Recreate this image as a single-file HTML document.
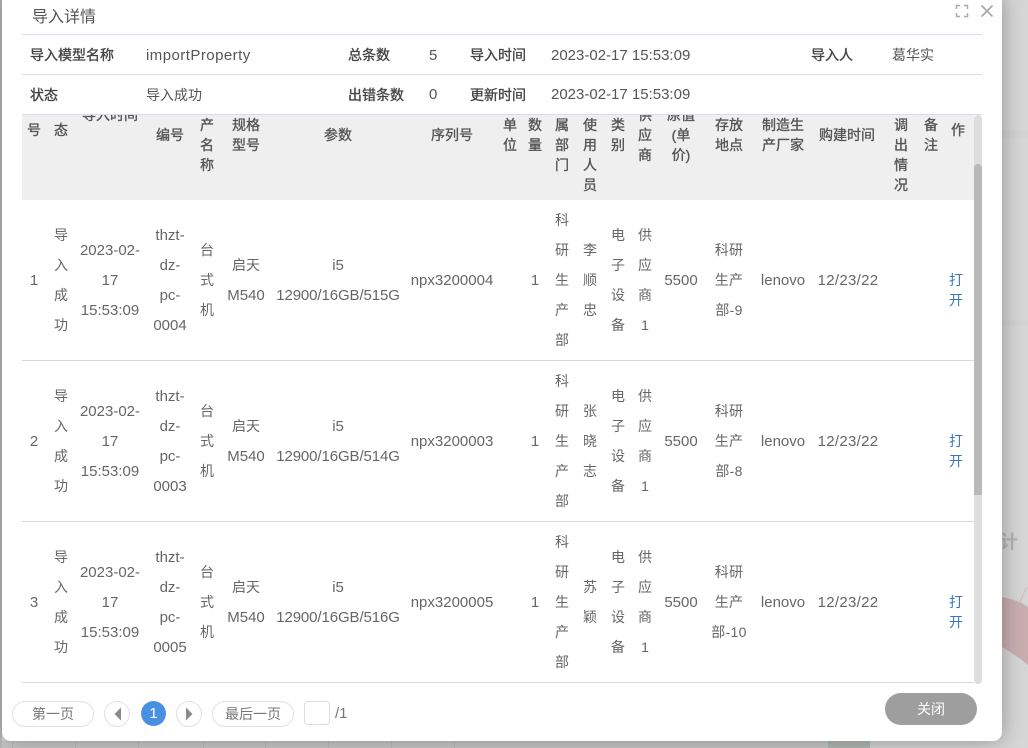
<!DOCTYPE html>
<html lang="zh-CN"><head><meta charset="utf-8"><title>导入详情</title>
<style>
html,body{margin:0;padding:0}
body{width:1028px;height:748px;overflow:hidden;position:relative;background:#d6d6d6;font-family:"Liberation Sans","Noto Sans CJK SC",sans-serif;color:#666;font-size:14px}
.a{position:absolute}
.modal{position:absolute;left:2px;top:-8px;width:1000px;height:749px;background:#fff;border-radius:9px;box-shadow:0 0 22px rgba(0,0,0,.32)}
.ln{position:absolute;left:22px;width:960px;height:1px;background:#d3dee8}
.l{position:absolute;line-height:20px;white-space:nowrap;color:#444}
.lb{font-size:14px;color:#444;-webkit-text-stroke:.35px #444}
.n{font-size:15px;color:#555;margin-top:1px}
.head{position:absolute;left:22px;top:115px;width:952px;height:85px;background:#efefef;overflow:hidden}
.h{position:absolute;font-size:14px;line-height:20px;color:#555;text-align:center;width:80px;white-space:nowrap;-webkit-text-stroke:.35px #555}
.row{position:absolute;left:22px;width:952px;height:161px;border-bottom:1px solid #d8d8d8;box-sizing:border-box}
.c{position:absolute;top:0;height:160px;width:100px;display:flex;align-items:center;justify-content:center;text-align:center;line-height:30px;white-space:nowrap;color:#666;font-size:15px}
.t{top:1px}
.z,.c span{font-size:14px}
.d{font-size:14px;letter-spacing:.3px}
.o{color:#3c76b8;line-height:20px;top:10px;font-size:14px}
.pill{position:absolute;top:701px;height:24px;border:1px solid #e2e2e2;border-radius:13px;text-align:center;line-height:25px;font-size:14px;color:#777;background:#fff}
.g{position:absolute;top:741px;width:1px;height:7px;background:#bcbcbc}
</style></head><body>
<svg class="a" style="left:1002px;top:580px" width="26" height="90" viewBox="0 0 26 90"><path d="M0 17C10 19 20 22 26 27V85C18 78 8 72 0 67Z" fill="#c9aeb0"/><path d="M18 22L24 8H26" fill="none" stroke="#d3b9ba"/></svg>
<div class="a" style="left:1000px;top:532px;font-weight:bold;font-size:18px;color:#b4b4b4;line-height:20px;white-space:nowrap">计</div>
<div class="a" style="left:1002px;top:130px;width:26px;height:8px;background:#d3d3d3"></div>
<div class="a" style="left:1002px;top:320px;width:26px;height:6px;background:#d3d3d3"></div>
<div class="a" style="left:828px;top:741px;width:42px;height:7px;background:#b2b8b4"></div>
<div class="a" style="left:0;top:741px;width:828px;height:7px;background:#c8c8c8"></div>
<div class="g" style="left:12px"></div><div class="g" style="left:75px"></div><div class="g" style="left:138px"></div><div class="g" style="left:203px"></div><div class="g" style="left:265px"></div><div class="g" style="left:328px"></div><div class="g" style="left:391px"></div><div class="g" style="left:454px"></div>
<div class="a" style="left:0;top:0;width:2px;height:748px;background:#bbb"></div>
<div class="modal"></div>

<div class="l" style="left:32px;top:8px;font-size:16px;color:#555">导入详情</div>
<svg class="a" style="left:955px;top:4px" width="14" height="14" viewBox="0 0 14 14" fill="none" stroke="#aaa" stroke-width="1.5"><path d="M1.5 5V1.5H5M9 1.5H12.5V5M12.5 9V12.5H9M5 12.5H1.5V9"/></svg>
<svg class="a" style="left:980px;top:4px" width="14" height="14" viewBox="0 0 14 14" fill="none" stroke="#aaa" stroke-width="1.8"><path d="M1.5 1.5L12.5 12.5M12.5 1.5L1.5 12.5"/></svg>
<div class="ln" style="top:34px"></div>
<div class="ln" style="top:74px"></div>
<div class="ln" style="top:114px"></div>

<div class="l lb" style="left:30px;top:45px">导入模型名称</div>
<div class="l n" style="left:146px;top:45px;letter-spacing:.45px">importProperty</div>
<div class="l lb" style="left:348px;top:45px">总条数</div>
<div class="l n" style="left:429px;top:45px">5</div>
<div class="l lb" style="left:470px;top:45px">导入时间</div>
<div class="l n" style="left:551px;top:45px">2023-02-17 15:53:09</div>
<div class="l lb" style="left:811px;top:45px">导入人</div>
<div class="l" style="left:892px;top:45px;color:#555">葛华实</div>
<div class="l lb" style="left:30px;top:85px">状态</div>
<div class="l" style="left:146px;top:85px;color:#555">导入成功</div>
<div class="l lb" style="left:348px;top:85px">出错条数</div>
<div class="l n" style="left:429px;top:84px">0</div>
<div class="l lb" style="left:470px;top:85px">更新时间</div>
<div class="l n" style="left:551px;top:84px">2023-02-17 15:53:09</div>

<div class="head">
<div class="h" style="left:-28px;top:5px">号</div>
<div class="h" style="left:-1px;top:5px">态</div>
<div class="h" style="left:48px;top:-10px">导入时间</div>
<div class="h" style="left:108px;top:10px">编号</div>
<div class="h" style="left:145px;top:0">产<br>名<br>称</div>
<div class="h" style="left:184px;top:0">规格<br>型号</div>
<div class="h" style="left:276px;top:10px">参数</div>
<div class="h" style="left:390px;top:10px">序列号</div>
<div class="h" style="left:448px;top:0">单<br>位</div>
<div class="h" style="left:473px;top:0">数<br>量</div>
<div class="h" style="left:500px;top:0">属<br>部<br>门</div>
<div class="h" style="left:528px;top:0">使<br>用<br>人<br>员</div>
<div class="h" style="left:556px;top:0">类<br>别</div>
<div class="h" style="left:583px;top:-10px">供<br>应<br>商</div>
<div class="h" style="left:619px;top:-10px">原值<br>(单<br>价)</div>
<div class="h" style="left:667px;top:0">存放<br>地点</div>
<div class="h" style="left:721px;top:0">制造生<br>产厂家</div>
<div class="h" style="left:785px;top:10px">购建时间</div>
<div class="h" style="left:839px;top:0">调<br>出<br>情<br>况</div>
<div class="h" style="left:869px;top:0">备<br>注</div>
<div class="h" style="left:896px;top:5px">作</div>
</div>

<div class="row" style="top:200px">
<div class="c t" style="left:-38px">1</div>
<div class="c z" style="left:-11px">导<br>入<br>成<br>功</div>
<div class="c t" style="left:38px">2023-02-<br>17<br>15:53:09</div>
<div class="c t" style="left:98px">thzt-<br>dz-<br>pc-<br>0004</div>
<div class="c z" style="left:135px">台<br>式<br>机</div>
<div class="c" style="left:174px"><div><span>启天</span><br>M540</div></div>
<div class="c t" style="left:266px;letter-spacing:-.1px">i5<br>12900/16GB/515G</div>
<div class="c t" style="left:380px">npx3200004</div>
<div class="c t" style="left:463px">1</div>
<div class="c z" style="left:490px">科<br>研<br>生<br>产<br>部</div>
<div class="c z" style="left:518px">李<br>顺<br>忠</div>
<div class="c z" style="left:546px">电<br>子<br>设<br>备</div>
<div class="c z" style="left:573px">供<br>应<br>商<br>1</div>
<div class="c t" style="left:609px">5500</div>
<div class="c d" style="left:657px">科研<br>生产<br>部-9</div>
<div class="c t" style="left:711px">lenovo</div>
<div class="c t" style="left:776px;letter-spacing:.3px">12/23/22</div>
<div class="c o" style="left:884px">打<br>开</div>
</div>

<div class="row" style="top:361px">
<div class="c t" style="left:-38px">2</div>
<div class="c z" style="left:-11px">导<br>入<br>成<br>功</div>
<div class="c t" style="left:38px">2023-02-<br>17<br>15:53:09</div>
<div class="c t" style="left:98px">thzt-<br>dz-<br>pc-<br>0003</div>
<div class="c z" style="left:135px">台<br>式<br>机</div>
<div class="c" style="left:174px"><div><span>启天</span><br>M540</div></div>
<div class="c t" style="left:266px;letter-spacing:-.1px">i5<br>12900/16GB/514G</div>
<div class="c t" style="left:380px">npx3200003</div>
<div class="c t" style="left:463px">1</div>
<div class="c z" style="left:490px">科<br>研<br>生<br>产<br>部</div>
<div class="c z" style="left:518px">张<br>晓<br>志</div>
<div class="c z" style="left:546px">电<br>子<br>设<br>备</div>
<div class="c z" style="left:573px">供<br>应<br>商<br>1</div>
<div class="c t" style="left:609px">5500</div>
<div class="c d" style="left:657px">科研<br>生产<br>部-8</div>
<div class="c t" style="left:711px">lenovo</div>
<div class="c t" style="left:776px;letter-spacing:.3px">12/23/22</div>
<div class="c o" style="left:884px">打<br>开</div>
</div>

<div class="row" style="top:522px">
<div class="c t" style="left:-38px">3</div>
<div class="c z" style="left:-11px">导<br>入<br>成<br>功</div>
<div class="c t" style="left:38px">2023-02-<br>17<br>15:53:09</div>
<div class="c t" style="left:98px">thzt-<br>dz-<br>pc-<br>0005</div>
<div class="c z" style="left:135px">台<br>式<br>机</div>
<div class="c" style="left:174px"><div><span>启天</span><br>M540</div></div>
<div class="c t" style="left:266px;letter-spacing:-.1px">i5<br>12900/16GB/516G</div>
<div class="c t" style="left:380px">npx3200005</div>
<div class="c t" style="left:463px">1</div>
<div class="c z" style="left:490px">科<br>研<br>生<br>产<br>部</div>
<div class="c z" style="left:518px">苏<br>颖</div>
<div class="c z" style="left:546px">电<br>子<br>设<br>备</div>
<div class="c z" style="left:573px">供<br>应<br>商<br>1</div>
<div class="c t" style="left:609px">5500</div>
<div class="c d" style="left:657px">科研<br>生产<br>部-10</div>
<div class="c t" style="left:711px">lenovo</div>
<div class="c t" style="left:776px;letter-spacing:.3px">12/23/22</div>
<div class="c o" style="left:884px">打<br>开</div>
</div>

<div class="a" style="left:974px;top:115px;width:8px;height:569px;background:#dedede;border-radius:4px"></div>
<div class="a" style="left:974px;top:164px;width:8px;height:331px;background:#b9b9b9;border-radius:4px 4px 0 0"></div>

<div class="pill" style="left:12px;width:80px">第一页</div>
<div class="pill" style="left:104px;width:24px"></div>
<svg class="a" style="left:104px;top:701px" width="26" height="26" viewBox="0 0 26 26"><path d="M17 6.5V19.5L10.5 13Z" fill="#8a8a8a"/></svg>
<div class="a" style="left:141px;top:701px;width:25px;height:25px;border-radius:50%;background:#4a90e2;color:#fff;text-align:center;line-height:25px;font-size:15px">1</div>
<div class="pill" style="left:176px;width:24px"></div>
<svg class="a" style="left:176px;top:701px" width="26" height="26" viewBox="0 0 26 26"><path d="M10 6.5V19.5L16.5 13Z" fill="#8a8a8a"/></svg>
<div class="pill" style="left:212px;width:80px">最后一页</div>
<div class="a" style="left:304px;top:701px;width:24px;height:22px;border:1px solid #ddd;border-radius:4px"></div>
<div class="a" style="left:335px;top:704px;line-height:20px;font-size:15px;color:#777">/1</div>
<div class="a" style="left:885px;top:693px;width:92px;height:32px;border-radius:16px;background:#9e9e9e;color:#fff;text-align:center;line-height:33px;font-size:14px">关闭</div>
</body></html>
